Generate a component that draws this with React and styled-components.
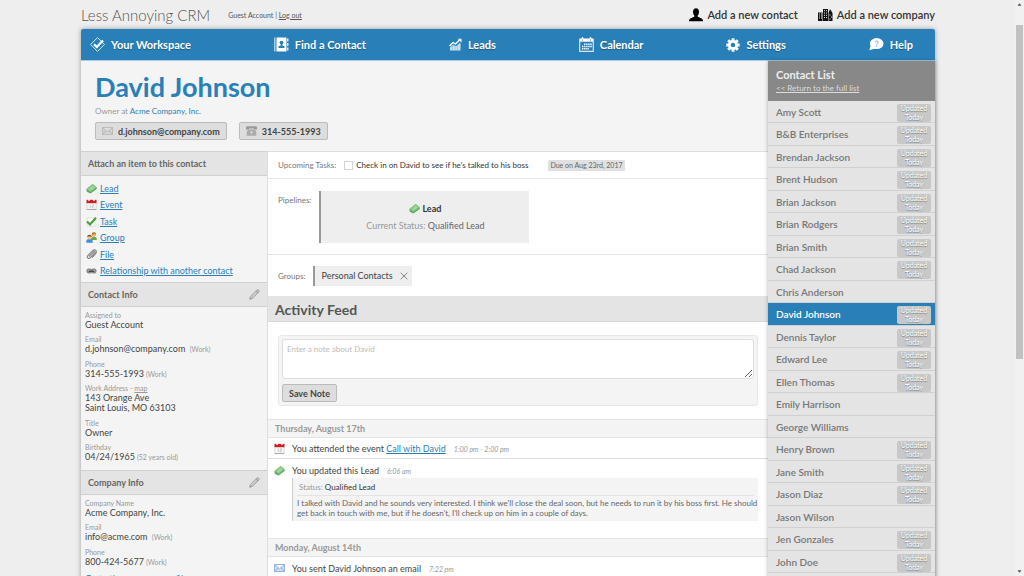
import React from "react";
import styled, { createGlobalStyle } from "styled-components";

const GlobalStyle = createGlobalStyle`
  * {
    box-sizing: border-box;
  }
  body {
    margin: 0;
    background-color: #eeeeee;
    color: #444444;
    font-family: Lato, "Open Sans", sans-serif;
    font-size: 8px;
    overflow: hidden;
  }
  svg {
    display: block;
    flex-shrink: 0;
  }
`;

const Page = styled.div`
  display: flex;
  height: 100vh;
  overflow: hidden;
`;
const Content = styled.div`
  flex: 1;
  min-width: 0;
  padding: 0 24px 0 25px;
`;
const ScrollBar = styled.div`
  width: 9px;
  display: flex;
  flex-direction: column;
  align-items: center;
  background-color: #f1f1f1;
`;
const ScrollThumb = styled.div`
  width: 7px;
  height: 58%;
  background-color: #c1c1c1;
`;
const ScrollEnd = styled.div`
  height: ${(props) => (props.$grow ? "auto" : "25px")};
  flex-grow: ${(props) => (props.$grow ? 1 : 0)};
  padding: 3px 0;
  display: flex;
  align-items: ${(props) => (props.$grow ? "flex-end" : "flex-start")};
`;
const Wrapper = styled.div`
  max-width: 854px;
  margin: 0 auto;
`;

const TopBar = styled.header`
  height: 29px;
  display: flex;
  align-items: center;
`;
const Brand = styled.div`
  font-size: 15px;
  font-weight: 300;
  line-height: 20px;
  color: #555555;
  white-space: nowrap;
`;
const Account = styled.div`
  margin-left: 18px;
  font-size: 7px;
  color: #555555;
  white-space: nowrap;
  a {
    color: inherit;
  }
`;
const AddLinks = styled.div`
  margin-left: auto;
  display: flex;
  gap: 20px;
`;
const AddLink = styled.a`
  display: flex;
  align-items: center;
  gap: 4px;
  font-size: 11px;
  font-weight: 600;
  color: #333333;
  text-decoration: none;
  white-space: nowrap;
`;

const Shell = styled.div`
  border-radius: 2px 2px 0 0;
  box-shadow: 0 0 5px rgba(0, 0, 0, 0.35);
`;
const Nav = styled.nav`
  height: 32px;
  padding: 0 22px 0 9px;
  display: flex;
  align-items: center;
  justify-content: space-between;
  background-color: #2980b9;
  border-bottom: 1px solid #a9cce3;
  border-radius: 2px 2px 0 0;
`;
const NavItem = styled.a`
  display: flex;
  align-items: center;
  gap: 6px;
  font-size: 11px;
  font-weight: 700;
  color: #ffffff;
  text-decoration: none;
  text-shadow: 0 1px 1px rgba(0, 0, 0, 0.3);
  white-space: nowrap;
`;

const Body = styled.div`
  display: flex;
`;
const Record = styled.div`
  flex: 1;
  min-width: 0;
`;
const Hero = styled.section`
  height: 90px;
  padding: 9px 14px;
  background-color: #f4f4f4;
`;
const Name = styled.h1`
  margin: 0;
  font-size: 27px;
  font-weight: 700;
  line-height: 33px;
  color: #2980b9;
`;
const Job = styled.div`
  margin-top: 3px;
  line-height: 10px;
  color: #999999;
  a {
    color: #2980b9;
    text-decoration: none;
  }
`;
const HeroButtons = styled.div`
  margin-top: 6px;
  display: flex;
  gap: 12px;
`;
const GreyButton = styled.button`
  height: 18px;
  padding: 0 6px;
  display: flex;
  align-items: center;
  gap: 5px;
  font-family: inherit;
  font-size: 9px;
  font-weight: 700;
  color: #444444;
  background-color: #dddddd;
  border: 1px solid #bbbbbb;
  border-radius: 2px;
`;

const Columns = styled.div`
  display: flex;
`;
const Side = styled.aside`
  width: 187px;
  height: 480px;
  background-color: #f4f4f4;
  border-right: 1px solid #dddddd;
`;
const SideTitle = styled.h2`
  margin: 0;
  height: 25px;
  padding: 0 7px;
  display: flex;
  align-items: center;
  justify-content: space-between;
  font-size: 9px;
  font-weight: 700;
  color: #666666;
  background-color: #e4e4e4;
  border-top: 1px solid #d0d0d0;
  border-bottom: 1px solid #d0d0d0;
`;
const IconButton = styled.button`
  padding: 0;
  border: 0;
  background: none;
`;
const AttachList = styled.ul`
  margin: 0;
  padding: 4px 5px 3px;
  list-style: none;
`;
const AttachItem = styled.li`
  height: 16px;
  display: flex;
  align-items: center;
  gap: 3px;
  font-size: 9px;
  &:nth-child(even) {
    height: 17px;
  }
`;
const Link = styled.a`
  color: #2980b9;
`;
const Fields = styled.dl`
  margin: 0;
  padding: 3px 4px;
`;
const Field = styled.div`
  margin-bottom: 4px;
  line-height: 10px;
  &:nth-child(even) {
    margin-bottom: 5px;
  }
  dt {
    font-size: 7px;
    color: #999999;
  }
  dd {
    margin: 0;
    font-size: 9px;
    color: #444444;
  }
  a {
    color: inherit;
  }
`;
const Hint = styled.small`
  margin-left: 2px;
  font-size: 7px;
  line-height: 0;
  color: #999999;
`;
const ProfileLink = styled.a`
  display: block;
  padding: 0 4px;
  font-size: 9px;
  color: #2980b9;
  line-height: 10px;
`;

const Main = styled.main`
  flex: 1;
  min-width: 0;
  background-color: #ffffff;
  border-top: 1px solid #dddddd;
`;
const Row = styled.section`
  height: ${(props) => props.$height}px;
  padding: 0 10px;
  display: flex;
  align-items: ${(props) => (props.$top ? "flex-start" : "center")};
  border-bottom: 1px solid #e4e4e4;
`;
const RowLabel = styled.span`
  line-height: 10px;
  color: #777777;
`;
const PipelineLabel = styled(RowLabel)`
  margin-top: 16px;
`;
const TaskLabel = styled.label`
  margin-left: 8px;
  display: flex;
  align-items: center;
  gap: 3px;
  color: #333333;
`;
const Check = styled.input`
  appearance: none;
  width: 9px;
  height: 9px;
  margin: 0;
  background-color: #ffffff;
  border: 1px solid #d4d4d4;
`;
const Due = styled.span`
  margin-left: 20px;
  padding: 0 2px;
  font-size: 7px;
  line-height: 11px;
  color: #666666;
  background-color: #e0e0e0;
  border-radius: 1px;
`;
const Pipeline = styled.div`
  width: 210px;
  height: 52px;
  margin: 12px 0 0 8px;
  display: flex;
  flex-direction: column;
  align-items: center;
  justify-content: center;
  gap: 5px;
  font-size: 9px;
  line-height: 12px;
  color: #999999;
  background-color: #eeeeee;
  border-left: 2px solid #999999;
  b {
    font-weight: 400;
    color: #666666;
  }
`;
const PipelineName = styled.div`
  display: flex;
  align-items: center;
  gap: 2px;
  font-weight: 700;
  color: #333333;
`;
const GroupTag = styled.div`
  height: 20px;
  margin-left: 8px;
  padding: 0 4px 0 6px;
  display: flex;
  align-items: center;
  gap: 7px;
  font-size: 9px;
  color: #444444;
  background-color: #eeeeee;
  border-left: 2px solid #999999;
`;
const FeedTitle = styled.h2`
  margin: 0;
  height: 25px;
  padding: 0 7px;
  display: flex;
  align-items: center;
  font-size: 14px;
  font-weight: 700;
  color: #555555;
  background-color: #e4e4e4;
  border-bottom: 1px solid #d8d8d8;
`;
const NoteForm = styled.form`
  margin: 13px 10px;
  padding: 3px;
  background-color: #f4f4f4;
  border: 1px solid #e8e8e8;
  border-radius: 3px;
`;
const NoteInput = styled.textarea`
  display: block;
  width: 100%;
  height: 40px;
  margin-bottom: 5px;
  padding: 4px;
  font-family: inherit;
  font-size: 8px;
  line-height: 10px;
  border: 1px solid #dddddd;
  border-radius: 3px;
  resize: vertical;
  &::placeholder {
    color: #bbbbbb;
  }
`;
const DayTitle = styled.h3`
  margin: 0;
  height: 19px;
  padding: 0 7px;
  display: flex;
  align-items: center;
  font-size: 9px;
  font-weight: 700;
  color: #999999;
  background-color: #f4f4f4;
  border-top: 1px solid #e4e4e4;
  border-bottom: 1px solid #e4e4e4;
`;
const FeedItem = styled.article`
  padding: ${(props) => (props.$last ? 6 : 5)}px 10px 4px 6px;
  display: flex;
  gap: 7px;
  border-bottom: ${(props) => (props.$last ? "0" : "1px solid #dddddd")};
`;
const FeedText = styled.div`
  flex: 1;
  line-height: 11px;
`;
const FeedLine = styled.div`
  font-size: 9px;
`;
const Time = styled.time`
  margin-left: 8px;
  font-size: 7px;
  font-style: italic;
  line-height: 0;
  color: #999999;
`;
const Quote = styled.div`
  margin: 2px 0 13px;
  padding: 4px 0 3px 4px;
  line-height: 10px;
  color: #666666;
  background-color: #f4f4f4;
  border-left: 1px solid #cccccc;
  p {
    margin: 0;
    padding-top: 2px;
  }
`;
const Status = styled.div`
  margin-right: 4px;
  padding: 0 2px 3px;
  color: #999999;
  border-bottom: 1px solid #e4e4e4;
  b {
    font-weight: 400;
    color: #333333;
  }
`;

const ContactList = styled.aside`
  width: 167px;
  z-index: 1;
  background-color: #e4e4e4;
  box-shadow: 0 0 4px rgba(0, 0, 0, 0.3);
`;
const ListHead = styled.div`
  height: 40px;
  padding: 7px 8px;
  color: #eeeeee;
  background-color: #888888;
  h2 {
    margin: 0;
    font-size: 11px;
    font-weight: 700;
    line-height: 14px;
  }
  a {
    display: block;
    line-height: 13px;
    color: #dddddd;
  }
`;
const ListRow = styled.a`
  height: 23px;
  padding: 0 4px 0 8px;
  display: flex;
  align-items: center;
  justify-content: space-between;
  font-size: 10px;
  font-weight: 600;
  line-height: 12px;
  color: ${(props) => (props.$active ? "#ffffff" : "#777777")};
  background-color: ${(props) => (props.$active ? "#2980b9" : "#e4e4e4")};
  border-bottom: 1px solid #d0d0d0;
  text-decoration: none;
  &:nth-of-type(odd) {
    height: 22px;
  }
`;
const Badge = styled.span`
  width: 34px;
  height: 18px;
  margin-top: 2px;
  font-size: 7px;
  font-weight: 400;
  line-height: 9px;
  text-align: center;
  color: #ffffff;
  background-color: #c8c8c8;
  border-radius: 2px;
  text-shadow: 0 1px 1px rgba(0, 0, 0, 0.4);
`;

const WorkspaceIcon = () => (
  <svg width="15" height="15" viewBox="0 0 15 15" fill="none">
    <path d="M7.5 .6 14.4 7.5 7.5 14.4 .6 7.5Z" stroke="#d4e6f1" />
    <path d="M4 7.3 6.8 10 13 3.6" stroke="#fff" strokeWidth="2.2" />
  </svg>
);
const FindIcon = () => (
  <svg width="15" height="15" viewBox="0 0 15 15">
    <path d="M0 .5h1.5v14H0z" fill="#a9cce3" />
    <path d="M2.5.5h10v14h-10z" fill="#fff" />
    <path d="M13 1.5h1.5v3H13zM13 6h1.5v3H13zM13 10.5h1.5v3H13z" fill="#d4e6f1" />
    <circle cx="7.5" cy="5.6" r="1.9" fill="#2980b9" />
    <path d="M6.7 6.5h1.6v2l2.2.8v1.7h-6V9.3l2.2-.8z" fill="#2980b9" />
  </svg>
);
const LeadsIcon = () => (
  <svg width="13" height="13" viewBox="0 0 13 13">
    <path d="M.5 8 4 4.500 6.500 6 10.500 2" fill="none" stroke="#fff" strokeWidth="1.3" />
    <path d="M8.8.8H12.5V4.5z" fill="#fff" />
    <path d="M1 9.500 4 6.800 7 8.300 11.500 4.500V12.500H1z" fill="#c6dfee" />
    <path d="M3.500 7v5.500M6 7.500v5M8.500 7v5.500" stroke="#7fb2d5" strokeWidth=".5" />
  </svg>
);
const CalendarIcon = () => (
  <svg width="15" height="15" viewBox="0 0 15 15" fill="none">
    <path d="M.7 2h13.600v12.300H.7z" stroke="#d4e6f1" strokeWidth="1.2" />
    <path d="M1 1.800h13v2.900H1z" fill="#fff" />
    <path d="M3.500.3v3M11.500.3v3" stroke="#fff" strokeWidth="1.6" />
    <path d="M3.500 3.500v-1M11.500 3.500v-1" stroke="#2980b9" strokeWidth=".8" />
    <path d="M5 7.200h8M3 9.500h10M3 11.700h7" stroke="#fff" strokeWidth="1.4" strokeDasharray="1.4 .7" />
  </svg>
);
const GearIcon = () => (
  <svg width="14" height="14" viewBox="-7 -7 14 14">
    {[0, 45, 90, 135].map((angle) => (
      <path key={angle} d="M-1.500-6.700h3v13.400h-3z" transform={`rotate(${angle})`} fill="#fff" />
    ))}
    <circle r="4.900" fill="#fff" />
    <circle r="2.300" fill="#2980b9" />
  </svg>
);
const HelpIcon = () => (
  <svg width="15" height="13" viewBox="0 0 15 13">
    <ellipse cx="7.700" cy="5.600" rx="6.800" ry="5.500" fill="#fff" />
    <path d="M1.500 8 .3 12.300 6 10.500z" fill="#fff" />
    <path d="M6.300 4.200c.1-1.700 2.900-1.600 2.800 0 0 1-1.400 1.200-1.400 2.400M7.700 7.600v1" fill="none" stroke="#5d9fcb" strokeWidth=".9" />
  </svg>
);
const PersonIcon = () => (
  <svg width="14" height="14" viewBox="0 0 14 14" fill="#000">
    <ellipse cx="7" cy="4" rx="3" ry="3.800" />
    <path d="M5.300 6h3.400v2.800l4 1.700q1.300.6 1.300 2.700H0q0-2.100 1.300-2.700l4-1.700z" />
  </svg>
);
const CompanyIcon = () => (
  <svg width="15" height="14" viewBox="0 0 15 14">
    <path d="M0 4.500h4.500V13H0zM5 1h5v12H5zM10.500 5l1.500-4 2.500 4V13h-4z" fill="#111" />
    <path d="M1 6h1M3 6h1M1 8h1M3 8h1M1 10h1M3 10h1M6 2.700h1M8 2.700h1M6 5h1M8 5h1M6 7.300h1M8 7.300h1M6 9.600h1M8 9.600h1M11.500 7h1M13 9h1M11.500 11h1" stroke="#eee" />
  </svg>
);
const TicketIcon = () => (
  <svg width="11" height="11" viewBox="0 0 11 11">
    <path d="M.4 6 6.600 1 10.700 4.300V6L4.500 10.500.8 8.700z" fill="#5fa75f" />
    <path d="M.6 6 6.700 1.100 10.500 4.300 4.500 9z" fill="#8ccb8c" />
    <path d="M3.500 6 6.800 3.300 8.300 4.500 5 7.100z" fill="#a6d8a6" />
  </svg>
);
const EventIcon = () => (
  <svg width="11" height="11" viewBox="0 0 11 11">
    <path d="M.8 3.500h9.400v7H.8z" fill="#f5f5f5" stroke="#cccccc" strokeWidth=".6" />
    <path d="M.5.8h10v3.400H.5z" fill="#cf1f22" />
    <path d="M3 0v2M8 0v2" stroke="#fff" strokeWidth="1.3" />
    <path d="M4.200 5.500v3.500M6 5.700h1.500v1.500H6v1.600h1.800" fill="none" stroke="#bbb" strokeWidth=".7" />
    <path d="M.8 10.500h9.400" stroke="#999" strokeWidth=".8" />
  </svg>
);
const TaskIcon = () => (
  <svg width="11" height="11" viewBox="0 0 11 11" fill="none">
    <path d="M1.300 1.800h7.700v8.400H1.300z" fill="#fff" stroke="#d5d5d5" strokeWidth=".7" />
    <path d="M1 5.400 4 8.500 10 1.800" stroke="#4a9d3d" strokeWidth="2.2" />
  </svg>
);
const GroupIcon = () => (
  <svg width="11" height="11" viewBox="0 0 11 11">
    <path d="M5 8V6.500q0-1.800 2.800-1.800T10.700 6.500V8z" fill="#6aaa4b" />
    <circle cx="7.800" cy="2.700" r="2.100" fill="#e7ae6b" />
    <path d="M5.600 2.500Q5.800.2 8 .2T10 2.500Q8.500 1.300 5.600 2.500z" fill="#b6761f" />
    <path d="M.3 10.700V9.300q0-2.200 3.200-2.200T6.700 9.300v1.400z" fill="#3f8dde" />
    <circle cx="3.500" cy="5.200" r="2.200" fill="#efc08c" />
    <path d="M1.200 5Q1.200 2.700 3.500 2.700T5.800 5Q3.800 3.700 1.200 5z" fill="#7d4f1c" />
  </svg>
);
const ClipIcon = () => (
  <svg width="11" height="11" viewBox="0 0 11 11" fill="none">
    <path d="M3 7.500 7.300 3q1-1 1.500-.3t-.3 1.500L4.300 8.700Q2.600 10 1.700 8.900T2 6.400L6.500 1.800Q8.500.2 9.800 1.400T9.500 4.800L6 8.500" stroke="#858585" strokeWidth="1.1" />
  </svg>
);
const ChainIcon = () => (
  <svg width="11" height="6" viewBox="0 0 11 6">
    <rect x=".5" y=".5" width="5.500" height="5" rx="2" fill="#8a8a8a" />
    <rect x="5" y=".5" width="5.500" height="5" rx="2" fill="#8a8a8a" />
    <path d="M2 2.500h2M7 2.500h2" stroke="#bbb" strokeWidth=".8" />
    <path d="M3 3.300h5" stroke="#444" strokeWidth="1.3" />
  </svg>
);
const PencilIcon = () => (
  <svg width="11" height="11" viewBox="0 0 11 11">
    <path d="M.7 10.300 1.400 7.300 7.800 1q1.200-.8 2 .1t.1 2L3.600 9.500z" fill="#bcbcbc" stroke="#a4a4a4" strokeWidth=".7" />
    <path d="M2.200 8.300 8.300 2.200" stroke="#dedede" strokeWidth=".8" />
    <path d="M6.900 1.900 9 4" stroke="#888" strokeWidth=".7" />
    <path d="M.7 10.300 1.100 8.800 2.100 9.900z" fill="#777" />
  </svg>
);
const MailIcon = ({ blue }) => (
  <svg width="11" height={blue ? 10 : 8} viewBox="0 0 11 8">
    <path
      d="M.5.5h10v7H.5zM.5.8 5.500 4.800 10.500.8M.5 7.300 4.200 3.800M10.500 7.300 6.800 3.800"
      fill={blue ? "#d0e2f8" : "#d4d4d4"}
      stroke={blue ? "#7ba3d8" : "#b4b4b4"}
      strokeWidth=".8"
    />
  </svg>
);
const PhoneIcon = () => (
  <svg width="11" height="10" viewBox="0 0 11 10">
    <path d="M0 1.500Q0 .3 1.500.3h8Q11 .3 11 1.500V3.500H8V2.500H3v1H0z" fill="#999" />
    <path d="M2 3.500h7L10.300 6V9.700H.7V6z" fill="#aaa" />
    <circle cx="5.500" cy="6.300" r="1.500" fill="#ccc" />
  </svg>
);
const CloseIcon = () => (
  <svg width="8" height="8" viewBox="0 0 8 8">
    <path d="M.7.7 7.300 7.300M7.300.7.7 7.300" stroke="#888" strokeWidth="1" />
  </svg>
);
const Arrow = ({ down }) => (
  <svg width="5" height="3" viewBox="0 0 5 3">
    <path d={down ? "M.5.2h4L2.500 2.700z" : "M.5 2.800h4L2.500.3z"} fill="#505050" />
  </svg>
);

const navItems = [
  { label: "Your Workspace", icon: <WorkspaceIcon /> },
  { label: "Find a Contact", icon: <FindIcon /> },
  { label: "Leads", icon: <LeadsIcon /> },
  { label: "Calendar", icon: <CalendarIcon /> },
  { label: "Settings", icon: <GearIcon /> },
  { label: "Help", icon: <HelpIcon /> },
];

const attachItems = [
  { label: "Lead", icon: <TicketIcon /> },
  { label: "Event", icon: <EventIcon /> },
  { label: "Task", icon: <TaskIcon /> },
  { label: "Group", icon: <GroupIcon /> },
  { label: "File", icon: <ClipIcon /> },
  { label: "Relationship with another contact", icon: <ChainIcon /> },
];

const contacts = [
  ["Amy Scott", true],
  ["B&B Enterprises", true],
  ["Brendan Jackson", true],
  ["Brent Hudson", true],
  ["Brian Jackson", true],
  ["Brian Rodgers", true],
  ["Brian Smith", true],
  ["Chad Jackson", true],
  ["Chris Anderson", false],
  ["David Johnson", true],
  ["Dennis Taylor", true],
  ["Edward Lee", true],
  ["Ellen Thomas", true],
  ["Emily Harrison", false],
  ["George Williams", false],
  ["Henry Brown", true],
  ["Jane Smith", true],
  ["Jason Diaz", true],
  ["Jason Wilson", false],
  ["Jen Gonzales", true],
  ["John Doe", true],
];

const App = () => {
  return (
    <Page>
      <GlobalStyle />
      <Content>
        <Wrapper>
          <TopBar>
            <Brand>Less Annoying CRM</Brand>
            <Account>
              Guest Account | <a href="#logout">Log out</a>
            </Account>
            <AddLinks>
              <AddLink href="#contact">
                <PersonIcon />
                Add a new contact
              </AddLink>
              <AddLink href="#company">
                <CompanyIcon />
                Add a new company
              </AddLink>
            </AddLinks>
          </TopBar>
          <Shell>
            <Nav>
              {navItems.map((item) => (
                <NavItem href="#nav" key={item.label}>
                  {item.icon}
                  {item.label}
                </NavItem>
              ))}
            </Nav>
            <Body>
              <Record>
                <Hero>
                  <Name>David Johnson</Name>
                  <Job>
                    Owner at <a href="#acme">Acme Company, Inc.</a>
                  </Job>
                  <HeroButtons>
                    <GreyButton>
                      <MailIcon />
                      d.johnson@company.com
                    </GreyButton>
                    <GreyButton>
                      <PhoneIcon />
                      314-555-1993
                    </GreyButton>
                  </HeroButtons>
                </Hero>
                <Columns>
                  <Side>
                    <SideTitle>Attach an item to this contact</SideTitle>
                    <AttachList>
                      {attachItems.map((item) => (
                        <AttachItem key={item.label}>
                          {item.icon}
                          <Link href="#attach">{item.label}</Link>
                        </AttachItem>
                      ))}
                    </AttachList>
                    <SideTitle>
                      Contact Info
                      <IconButton aria-label="Edit contact info">
                        <PencilIcon />
                      </IconButton>
                    </SideTitle>
                    <Fields>
                      <Field>
                        <dt>Assigned to</dt>
                        <dd>Guest Account</dd>
                      </Field>
                      <Field>
                        <dt>Email</dt>
                        <dd>
                          d.johnson@company.com <Hint>(Work)</Hint>
                        </dd>
                      </Field>
                      <Field>
                        <dt>Phone</dt>
                        <dd>
                          314-555-1993<Hint>(Work)</Hint>
                        </dd>
                      </Field>
                      <Field>
                        <dt>
                          Work Address - <a href="#map">map</a>
                        </dt>
                        <dd>
                          143 Orange Ave
                          <br />
                          Saint Louis, MO 63103
                        </dd>
                      </Field>
                      <Field>
                        <dt>Title</dt>
                        <dd>Owner</dd>
                      </Field>
                      <Field>
                        <dt>Birthday</dt>
                        <dd>
                          04/24/1965<Hint>(52 years old)</Hint>
                        </dd>
                      </Field>
                    </Fields>
                    <SideTitle>
                      Company Info
                      <IconButton aria-label="Edit company info">
                        <PencilIcon />
                      </IconButton>
                    </SideTitle>
                    <Fields>
                      <Field>
                        <dt>Company Name</dt>
                        <dd>Acme Company, Inc.</dd>
                      </Field>
                      <Field>
                        <dt>Email</dt>
                        <dd>
                          info@acme.com <Hint>(Work)</Hint>
                        </dd>
                      </Field>
                      <Field>
                        <dt>Phone</dt>
                        <dd>
                          800-424-5677<Hint>(Work)</Hint>
                        </dd>
                      </Field>
                    </Fields>
                    <ProfileLink href="#profile">Go to the company profile</ProfileLink>
                  </Side>
                  <Main>
                    <Row $height={27}>
                      <RowLabel>Upcoming Tasks:</RowLabel>
                      <TaskLabel>
                        <Check type="checkbox" />
                        Check in on David to see if he's talked to his boss
                      </TaskLabel>
                      <Due>Due on Aug 23rd, 2017</Due>
                    </Row>
                    <Row $height={76} $top>
                      <PipelineLabel>Pipelines:</PipelineLabel>
                      <Pipeline>
                        <PipelineName>
                          <TicketIcon />
                          Lead
                        </PipelineName>
                        <div>
                          Current Status: <b>Qualified Lead</b>
                        </div>
                      </Pipeline>
                    </Row>
                    <Row $height={42}>
                      <RowLabel>Groups:</RowLabel>
                      <GroupTag>
                        Personal Contacts
                        <IconButton aria-label="Remove group">
                          <CloseIcon />
                        </IconButton>
                      </GroupTag>
                    </Row>
                    <FeedTitle>Activity Feed</FeedTitle>
                    <NoteForm>
                      <NoteInput aria-label="Note" placeholder="Enter a note about David" />
                      <GreyButton type="button">Save Note</GreyButton>
                    </NoteForm>
                    <DayTitle>Thursday, August 17th</DayTitle>
                    <FeedItem>
                      <EventIcon />
                      <FeedText>
                        <FeedLine>
                          You attended the event <Link href="#event">Call with David</Link>
                          <Time>1:00 pm - 2:00 pm</Time>
                        </FeedLine>
                      </FeedText>
                    </FeedItem>
                    <FeedItem $last>
                      <TicketIcon />
                      <FeedText>
                        <FeedLine>
                          You updated this Lead
                          <Time>6:06 am</Time>
                        </FeedLine>
                        <Quote>
                          <Status>
                            Status: <b>Qualified Lead</b>
                          </Status>
                          <p>
                            I talked with David and he sounds very interested. I think we'll close
                            the deal soon, but he needs to run it by his boss first. He should get
                            back in touch with me, but if he doesn't, I'll check up on him in a
                            couple of days.
                          </p>
                        </Quote>
                      </FeedText>
                    </FeedItem>
                    <DayTitle>Monday, August 14th</DayTitle>
                    <FeedItem $last>
                      <MailIcon blue />
                      <FeedText>
                        <FeedLine>
                          You sent David Johnson an email
                          <Time>7:22 pm</Time>
                        </FeedLine>
                      </FeedText>
                    </FeedItem>
                  </Main>
                </Columns>
              </Record>
              <ContactList>
                <ListHead>
                  <h2>Contact List</h2>
                  <a href="#list">&lt;&lt; Return to the full list</a>
                </ListHead>
                {contacts.map(([name, updated]) => (
                  <ListRow href="#person" key={name} $active={name === "David Johnson"}>
                    {name}
                    {updated && (
                      <Badge>
                        Updated
                        <br />
                        Today
                      </Badge>
                    )}
                  </ListRow>
                ))}
              </ContactList>
            </Body>
          </Shell>
        </Wrapper>
      </Content>
      <ScrollBar aria-hidden="true">
        <ScrollEnd>
          <Arrow />
        </ScrollEnd>
        <ScrollThumb />
        <ScrollEnd $grow>
          <Arrow down />
        </ScrollEnd>
      </ScrollBar>
    </Page>
  );
};

export default App;
